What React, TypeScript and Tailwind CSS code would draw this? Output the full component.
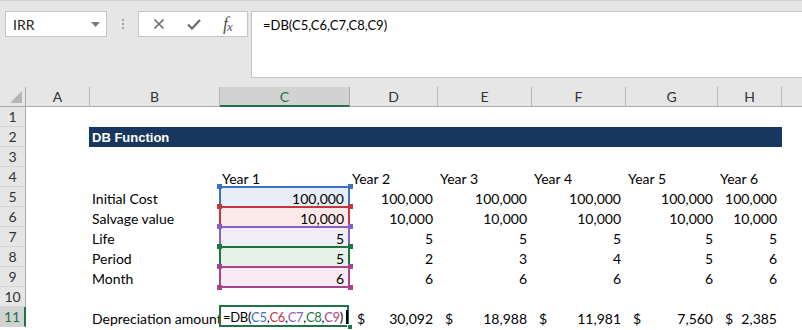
import React from 'react';

const COLS = 'grid grid-cols-[26px_64px_130px_130px_88px_94px_94px_92px_64px_1fr] auto-rows-[20px]';

const HEADERS = ['A', 'B', 'C', 'D', 'E', 'F', 'G', 'H', ''];

// range highlight colours for C5..C9 while the formula is being edited
const REFS = [
  { fill: 'bg-[#e8eef8]', line: 'border-[#3d70c4]', dot: 'bg-[#3d70c4]', text: 'text-[#3d70c4]' },
  { fill: 'bg-[#fbe9e9]', line: 'border-[#c4363f]', dot: 'bg-[#c4363f]', text: 'text-[#c4363f]' },
  { fill: 'bg-[#f1eef8]', line: 'border-[#8560be]', dot: 'bg-[#8560be]', text: 'text-[#8560be]' },
  { fill: 'bg-[#e6f2e7]', line: 'border-[#19783a]', dot: 'bg-[#19783a]', text: 'text-[#19783a]' },
  { fill: 'bg-[#f9eaf3]', line: 'border-[#a9448c]', dot: 'bg-[#a9448c]', text: 'text-[#a9448c]' },
];

function RowHead({ n, active }: { n: number; active?: boolean }) {
  return (
    <div
      className={`flex items-center justify-center border-b border-b-[#d4d4d4] text-[14px] ${
        active
          ? 'bg-[#d2d2d2] border-r-2 border-r-[#217346] text-[#217346]'
          : 'bg-[#e6e6e6] border-r border-r-[#ababab] text-[#333]'
      }`}
    >
      {n}
    </div>
  );
}

function Num({ v }: { v: string }) {
  return <div className="flex items-center justify-end pr-[5px] pt-[2px]">{v}</div>;
}

function Label({ v }: { v: string }) {
  return <div className="flex items-center pl-[2px] pt-[2px] whitespace-nowrap overflow-hidden">{v}</div>;
}

function Dollar({ v }: { v: string }) {
  return (
    <div className="flex items-center justify-between pl-[7px] pr-[5px] pt-[2px]">
      <span>$</span>
      <span>{v}</span>
    </div>
  );
}

function RefCell({ i, v }: { i: number; v: string }) {
  const r = REFS[i];
  const last = i === REFS.length - 1;
  return (
    <div className={`relative flex items-center justify-end pr-[6px] pt-[2px] ${r.fill}`}>
      {v}
      <div
        className={`absolute -left-[1px] -top-[1px] w-[131px] border-l-2 border-r-2 border-t-2 ${r.line} ${
          last ? 'h-[22px] border-b-2' : 'h-[21px]'
        }`}
      />
      <div className={`absolute -left-[3px] -top-[3px] w-[5px] h-[5px] ${r.dot}`} />
      <div className={`absolute -right-[3px] -top-[3px] w-[5px] h-[5px] ${r.dot}`} />
      {last && (
        <>
          <div className={`absolute -left-[3px] -bottom-[3px] w-[5px] h-[5px] ${r.dot}`} />
          <div className={`absolute -right-[3px] -bottom-[3px] w-[5px] h-[5px] ${r.dot}`} />
        </>
      )}
    </div>
  );
}

function Empty() {
  return <div />;
}

export default function App() {
  const years = ['Year 1', 'Year 2', 'Year 3', 'Year 4', 'Year 5', 'Year 6'];
  const period = ['2', '3', '4', '5', '6'];
  const dep = ['30,092', '18,988', '11,981', '7,560', '2,385'];

  return (
    <div className="w-[802px] h-[330px] overflow-hidden bg-white font-[Lato,sans-serif] text-[14px] text-black">
      {/* formula bar */}
      <div className="h-[77px] bg-[#e6e6e6] border-t border-t-[#d4d4d4] flex items-start pt-[10px] pl-[5px]">
        <div className="w-[102px] h-[26px] bg-white border border-[#c6c6c6] flex items-center justify-between pl-[7px] pr-[6px]">
          <span className="text-[14px] text-[#222]">IRR</span>
          <svg width="9" height="5" viewBox="0 0 9 5">
            <polygon points="0,0 9,0 4.5,5" fill="#7a7a7a" />
          </svg>
        </div>
        <div className="w-[31px] h-[26px] flex flex-col items-center justify-center gap-[2px]">
          <div className="w-[2px] h-[2px] bg-[#a6a6a6]" />
          <div className="w-[2px] h-[2px] bg-[#a6a6a6]" />
          <div className="w-[2px] h-[2px] bg-[#a6a6a6]" />
        </div>
        <div className="w-[110px] h-[26px] bg-white border border-[#c6c6c6] flex items-center">
          <div className="w-[38px] flex justify-center pl-[2px]">
            <svg width="12" height="12" viewBox="0 0 12 12">
              <path d="M1.5 1.5 L10.5 10.5 M10.5 1.5 L1.5 10.5" stroke="#6a6a6a" strokeWidth="1.6" />
            </svg>
          </div>
          <div className="w-[34px] flex justify-center">
            <svg width="14" height="11" viewBox="0 0 14 11">
              <path d="M1 5.5 L5 9.5 L13 1" stroke="#6a6a6a" strokeWidth="2.2" fill="none" />
            </svg>
          </div>
          <div className="flex-1 flex items-end justify-center font-['Liberation_Serif',serif] italic text-[#555] leading-none pr-[2px] pb-[1px]">
            <span className="text-[18px]">f</span>
            <span className="text-[13px] -ml-[1px]">x</span>
          </div>
        </div>
        <div className="ml-[3px] flex-1 h-[67px] bg-white border border-[#c6c6c6] border-r-0 pl-[11px] pt-[4px] text-[13px]">
          =DB(C5,C6,C7,C8,C9)
        </div>
      </div>

      <div className="h-[10px] bg-[#e6e6e6]" />

      {/* column headers */}
      <div className={`${COLS} bg-[#e6e6e6] text-[14px] text-[#333]`}>
        <div className="relative border-r border-r-[#ababab] border-b border-b-[#ababab]">
          <svg className="absolute right-[3px] bottom-[3px]" width="12" height="12" viewBox="0 0 12 12">
            <polygon points="12,0 12,12 0,12" fill="#b5b5b5" />
          </svg>
        </div>
        {HEADERS.map((h, i) =>
          h === 'C' ? (
            <div
              key={i}
              className="flex items-center justify-center bg-[#d2d2d2] border-b-2 border-b-[#217346] border-r border-r-[#ababab] text-[#217346]"
            >
              {h}
            </div>
          ) : (
            <div
              key={i}
              className={`flex items-center justify-center border-b border-b-[#ababab] ${
                i < 8 ? 'border-r border-r-[#b8b8b8]' : ''
              }`}
            >
              {h}
            </div>
          )
        )}
      </div>

      {/* sheet body */}
      <div className={COLS}>
        {/* row 1 */}
        <RowHead n={1} />
        {Array.from({ length: 9 }).map((_, i) => <Empty key={`r1${i}`} />)}

        {/* row 2 */}
        <RowHead n={2} />
        <Empty />
        <div className="col-span-7 -ml-px bg-[#17375e] text-white font-['Liberation_Sans',sans-serif] font-bold text-[13px] flex items-center pl-[3px] pt-[1px]">
          DB Function
        </div>
        <Empty />

        {/* row 3 */}
        <RowHead n={3} />
        {Array.from({ length: 9 }).map((_, i) => <Empty key={`r3${i}`} />)}

        {/* row 4 */}
        <RowHead n={4} />
        <Empty />
        <Empty />
        {years.map((y) => (
          <Label key={y} v={y} />
        ))}
        <Empty />

        {/* row 5 */}
        <RowHead n={5} />
        <Empty />
        <Label v="Initial Cost" />
        <RefCell i={0} v="100,000" />
        {years.slice(1).map((y) => (
          <Num key={y} v="100,000" />
        ))}
        <Empty />

        {/* row 6 */}
        <RowHead n={6} />
        <Empty />
        <Label v="Salvage value" />
        <RefCell i={1} v="10,000" />
        {years.slice(1).map((y) => (
          <Num key={y} v="10,000" />
        ))}
        <Empty />

        {/* row 7 */}
        <RowHead n={7} />
        <Empty />
        <Label v="Life" />
        <RefCell i={2} v="5" />
        {years.slice(1).map((y) => (
          <Num key={y} v="5" />
        ))}
        <Empty />

        {/* row 8 */}
        <RowHead n={8} />
        <Empty />
        <Label v="Period" />
        <RefCell i={3} v="5" />
        {period.map((p, i) => (
          <Num key={i} v={p} />
        ))}
        <Empty />

        {/* row 9 */}
        <RowHead n={9} />
        <Empty />
        <Label v="Month" />
        <RefCell i={4} v="6" />
        {years.slice(1).map((y) => (
          <Num key={y} v="6" />
        ))}
        <Empty />

        {/* row 10 */}
        <RowHead n={10} />
        {Array.from({ length: 9 }).map((_, i) => <Empty key={`r10${i}`} />)}

        {/* row 11 */}
        <RowHead n={11} active />
        <Empty />
        <Label v="Depreciation amount" />
        <div className="relative flex items-center pl-[3px] pt-[2px] whitespace-nowrap text-[13px] tracking-[-0.3px]">
          <span>=DB(</span>
          <span className={REFS[0].text}>C5</span>,
          <span className={REFS[1].text}>C6</span>,
          <span className={REFS[2].text}>C7</span>,
          <span className={REFS[3].text}>C8</span>,
          <span className={REFS[4].text}>C9</span>
          <span>)</span>
          <div className="absolute -left-[1px] -top-[2px] w-[130px] h-[22px] border-2 border-[#217346]" />
          <div className="absolute right-[2px] top-[3px] w-[2px] h-[14px] bg-black" />
          <div className="absolute -right-[3px] -bottom-[3px] w-[6px] h-[6px] bg-[#217346] border border-white" />
        </div>
        {dep.map((d) => (
          <Dollar key={d} v={d} />
        ))}
        <Empty />
      </div>
    </div>
  );
}
